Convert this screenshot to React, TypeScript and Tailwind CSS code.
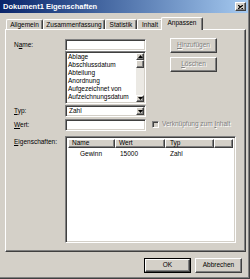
import type { ReactNode } from 'react';

const raised =
  'border border-t-white border-l-white border-r-[#404040] border-b-[#404040] shadow-[inset_-1px_-1px_#808080]';
const sunken =
  'border border-t-[#808080] border-l-[#808080] border-r-white border-b-white shadow-[inset_1px_1px_#404040,inset_-1px_-1px_#d4d0c8]';
const disabledText = 'text-[#808080] [text-shadow:1px_1px_0_#fff]';

function Arrow({ up = false }: { up?: boolean }) {
  return (
    <svg width="5" height="3" viewBox="0 0 5 3" className={up ? 'rotate-180' : ''}>
      <path d="M0 0h5L2.5 3z" fill="#000" />
    </svg>
  );
}

function Label({ children }: { children: ReactNode }) {
  return <div className="w-[51px] h-[12px] flex items-center shrink-0">{children}</div>;
}

function Tab({ label, w, active = false }: { label: string; w: string; active?: boolean }) {
  return (
    <div
      className={
        active
          ? `${w} -ml-[2px] h-[13px] relative z-10 bg-[#d4d0c8] border-t border-l border-white border-r border-r-[#404040] shadow-[inset_-1px_0_#808080] rounded-t-[2px] flex items-center justify-center pb-[1px]`
          : `${w} h-[11px] border-t border-l border-white border-r border-r-[#404040] shadow-[inset_-1px_0_#808080] rounded-t-[2px] flex items-center justify-center`
      }
    >
      {label}
    </div>
  );
}

const items = ['Ablage', 'Abschlussdatum', 'Abteilung', 'Anordnung', 'Aufgezeichnet von', 'Aufzeichnungsdatum'];

export default function App() {
  return (
    <div className="w-[250px] h-[279px] bg-[#d4d0c8] flex flex-col overflow-hidden border-r border-b border-[#404040] shadow-[inset_-1px_-1px_#808080] font-['Liberation_Sans',Arial,sans-serif] text-[6.5px] leading-none text-black">
      {/* Title bar */}
      <div className="h-[13px] mr-[1px] bg-gradient-to-r from-[#0a246a] to-[#a6caf0] flex items-center justify-between pl-[3px] pr-[2px]">
        <span className="text-white font-bold text-[7.5px]">Dokument1 Eigenschaften</span>
        <div className={`w-[11px] h-[9px] bg-[#d4d0c8] ${raised} flex items-center justify-center`}>
          <svg width="5" height="4" viewBox="0 0 5 4">
            <path d="M0 0L5 4M5 0L0 4" stroke="#000" strokeWidth="1.2" />
          </svg>
        </div>
      </div>

      {/* Tabs */}
      <div className="mt-[4px] h-[13px] flex items-end pl-[6px]">
        <Tab label="Allgemein" w="w-[37px]" />
        <Tab label="Zusammenfassung" w="w-[62px]" />
        <Tab label="Statistik" w="w-[32px]" />
        <Tab label="Inhalt" w="w-[26px]" />
        <Tab label="Anpassen" w="w-[42px]" active />
      </div>

      {/* Panel */}
      <div className="-mt-[1px] ml-[5px] w-[241px] h-[223px] border border-t-white border-l-white border-r-[#404040] border-b-[#404040] shadow-[inset_-1px_-1px_#808080] pt-[9px] pl-[8px] flex flex-col">
        <div className="flex items-start">
          <Label>
            <span>
              N<u>a</u>me:
            </span>
          </Label>
          <div className="w-[81px] flex flex-col">
            <div className={`h-[12px] bg-white ${sunken}`} />
            <div className={`h-[53px] bg-white ${sunken} flex p-[1px]`}>
              <div className="flex-1 pl-[1px] overflow-hidden leading-[8.1px] whitespace-nowrap">
                {items.map((it) => (
                  <div key={it}>{it}</div>
                ))}
              </div>
              <div className="w-[8px] flex flex-col bg-[#ebe9e4]">
                <div className={`h-[7px] bg-[#d4d0c8] ${raised} flex items-center justify-center`}>
                  <Arrow up />
                </div>
                <div className={`h-[8px] bg-[#d4d0c8] ${raised}`} />
                <div className="flex-1" />
                <div className={`h-[7px] bg-[#d4d0c8] ${raised} flex items-center justify-center`}>
                  <Arrow />
                </div>
              </div>
            </div>
          </div>
          <div className="ml-[24px] -mt-[1px] flex flex-col gap-[4px]">
            <div className={`w-[47px] h-[15px] ${raised} flex items-center justify-center ${disabledText}`}>
              <span>
                <u>H</u>inzufügen
              </span>
            </div>
            <div className={`w-[47px] h-[15px] ${raised} flex items-center justify-center ${disabledText}`}>
              <span>
                <u>L</u>öschen
              </span>
            </div>
          </div>
        </div>

        <div className="mt-[1px] flex items-start">
          <Label>
            <span>
              <u>T</u>yp:
            </span>
          </Label>
          <div className={`w-[81px] h-[12px] bg-white ${sunken} flex items-center p-[1px]`}>
            <span className="flex-1 pl-[2px]">Zahl</span>
            <div className={`w-[8px] h-full bg-[#d4d0c8] ${raised} flex items-center justify-center`}>
              <Arrow />
            </div>
          </div>
        </div>

        <div className="mt-[2px] flex items-start">
          <Label>
            <span>
              <u>W</u>ert:
            </span>
          </Label>
          <div className={`w-[81px] h-[12px] bg-white ${sunken}`} />
          <div className="ml-[6px] mt-[2px] flex items-center gap-[3px]">
            <div className={`w-[7px] h-[7px] bg-[#d4d0c8] ${sunken}`} />
            <span className={disabledText}>
              Verknüpfung zum <u>I</u>nhalt
            </span>
          </div>
        </div>

        <div className="mt-[5px] flex items-start">
          <div className="w-[51px] shrink-0 pt-[3px]">
            <u>E</u>igenschaften:
          </div>
          <div className={`w-[171px] h-[107px] bg-white ${sunken} p-[2px] flex flex-col`}>
            <div className="flex h-[9px]">
              <div className={`w-[47px] ${raised} bg-[#d4d0c8] flex items-center pl-[3px]`}>Name</div>
              <div className={`w-[50px] ${raised} bg-[#d4d0c8] flex items-center pl-[3px]`}>Wert</div>
              <div className={`w-[49px] ${raised} bg-[#d4d0c8] flex items-center pl-[4px]`}>Typ</div>
              <div className={`flex-1 ${raised} bg-[#d4d0c8]`} />
            </div>
            <div className="flex h-[9px] mt-[2px] items-center">
              <div className="w-[47px] pl-[12px]">Gewinn</div>
              <div className="w-[50px] pl-[5px]">15000</div>
              <div className="w-[49px] pl-[5px]">Zahl</div>
            </div>
          </div>
        </div>
      </div>

      {/* Dialog buttons */}
      <div className="mt-[6px] flex justify-end gap-[4px] pr-[7px]">
        <div className="w-[47px] h-[15px] border border-black">
          <div className={`h-full ${raised} flex items-center justify-center`}>OK</div>
        </div>
        <div className={`w-[47px] h-[15px] ${raised} flex items-center justify-center`}>Abbrechen</div>
      </div>
    </div>
  );
}
